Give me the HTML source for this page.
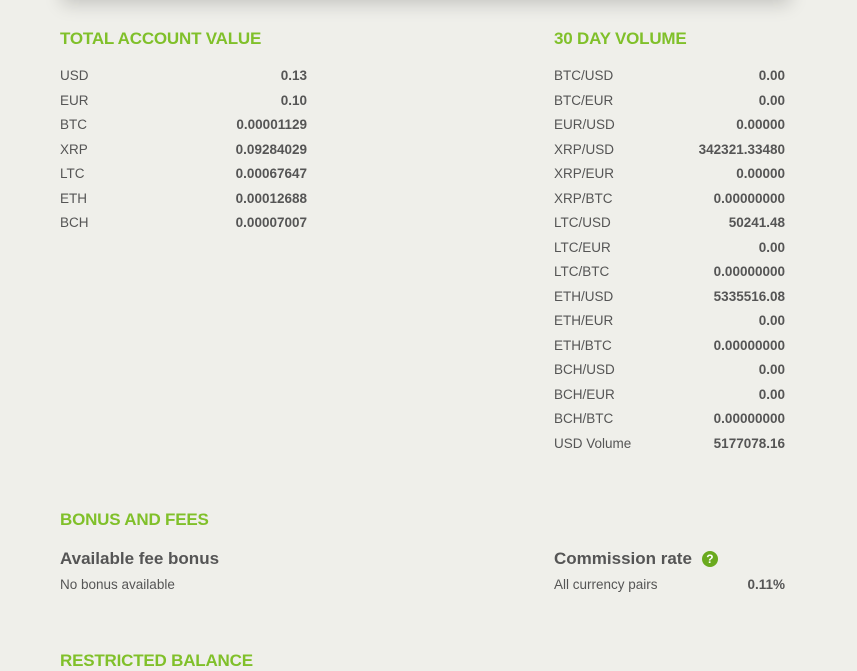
<!DOCTYPE html>
<html><head><style>
body{margin:0;width:857px;height:668px;background:#efefea;font-family:"Liberation Sans",sans-serif;color:#555;position:relative;overflow:hidden}
.card{position:absolute;left:62px;top:-40px;width:728px;height:40px;background:#efefea;box-shadow:0 4px 18px rgba(0,0,0,.18)}
.h{position:absolute;color:#80c02a;font-weight:bold;font-size:17px;letter-spacing:-0.2px}
.r{position:absolute;font-size:13.5px;height:18px;line-height:18px}
.r b{position:absolute;right:0;top:0;color:#555}
.h2{position:absolute;font-weight:bold;font-size:17px;color:#555}
.q{display:inline-block;width:16px;height:16px;border-radius:50%;background:#6aaa1e;color:#fff;font-size:12px;font-weight:bold;text-align:center;line-height:16px;margin-left:10px;vertical-align:1px}
</style></head><body>
<div class="card"></div>
<div class="h" style="left:60px;top:29px">TOTAL ACCOUNT VALUE</div>
<div class="h" style="left:554px;top:29px">30 DAY VOLUME</div>
<div class="r" style="left:60px;top:67px;width:247px">USD<b>0.13</b></div>
<div class="r" style="left:60px;top:91.5px;width:247px">EUR<b>0.10</b></div>
<div class="r" style="left:60px;top:116px;width:247px">BTC<b>0.00001129</b></div>
<div class="r" style="left:60px;top:140.5px;width:247px">XRP<b>0.09284029</b></div>
<div class="r" style="left:60px;top:165px;width:247px">LTC<b>0.00067647</b></div>
<div class="r" style="left:60px;top:189.5px;width:247px">ETH<b>0.00012688</b></div>
<div class="r" style="left:60px;top:214px;width:247px">BCH<b>0.00007007</b></div>

<div class="r" style="left:554px;top:67px;width:231px">BTC/USD<b>0.00</b></div>
<div class="r" style="left:554px;top:91.5px;width:231px">BTC/EUR<b>0.00</b></div>
<div class="r" style="left:554px;top:116px;width:231px">EUR/USD<b>0.00000</b></div>
<div class="r" style="left:554px;top:140.5px;width:231px">XRP/USD<b>342321.33480</b></div>
<div class="r" style="left:554px;top:165px;width:231px">XRP/EUR<b>0.00000</b></div>
<div class="r" style="left:554px;top:189.5px;width:231px">XRP/BTC<b>0.00000000</b></div>
<div class="r" style="left:554px;top:214px;width:231px">LTC/USD<b>50241.48</b></div>
<div class="r" style="left:554px;top:238.5px;width:231px">LTC/EUR<b>0.00</b></div>
<div class="r" style="left:554px;top:263px;width:231px">LTC/BTC<b>0.00000000</b></div>
<div class="r" style="left:554px;top:287.5px;width:231px">ETH/USD<b>5335516.08</b></div>
<div class="r" style="left:554px;top:312px;width:231px">ETH/EUR<b>0.00</b></div>
<div class="r" style="left:554px;top:336.5px;width:231px">ETH/BTC<b>0.00000000</b></div>
<div class="r" style="left:554px;top:361px;width:231px">BCH/USD<b>0.00</b></div>
<div class="r" style="left:554px;top:385.5px;width:231px">BCH/EUR<b>0.00</b></div>
<div class="r" style="left:554px;top:410px;width:231px">BCH/BTC<b>0.00000000</b></div>
<div class="r" style="left:554px;top:434.5px;width:231px">USD Volume<b>5177078.16</b></div>

<div class="h" style="left:60px;top:510px">BONUS AND FEES</div>
<div class="h2" style="left:60px;top:549px">Available fee bonus</div>
<div class="r" style="left:60px;top:576px;width:247px">No bonus available</div>
<div class="h2" style="left:554px;top:549px">Commission rate<span class="q">?</span></div>
<div class="r" style="left:554px;top:576px;width:231px">All currency pairs<b>0.11%</b></div>
<div class="h" style="left:60px;top:651px">RESTRICTED BALANCE</div>
</body></html>
